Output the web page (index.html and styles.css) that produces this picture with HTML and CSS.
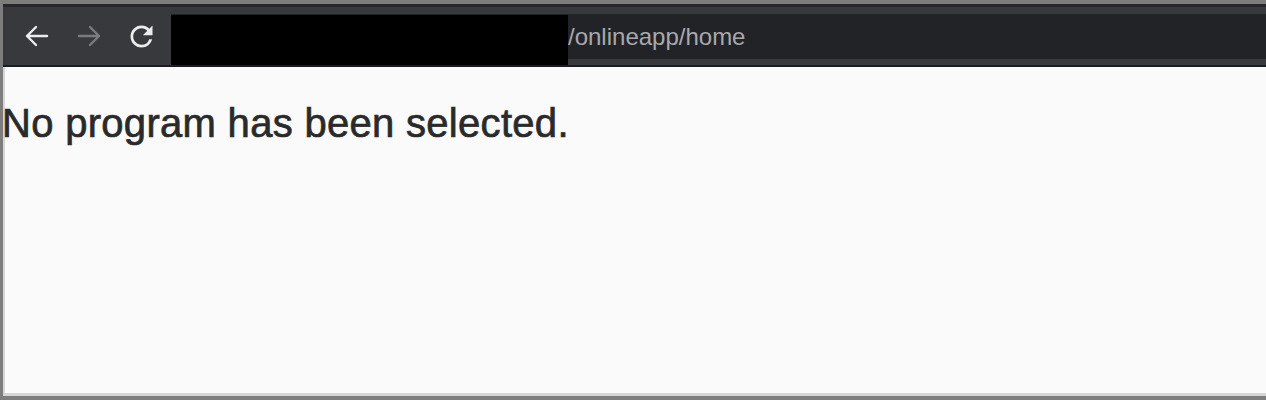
FILE: index.html
```html
<!DOCTYPE html>
<html lang="en">
<head>
<meta charset="utf-8">
<title>Online App</title>
<link rel="stylesheet" href="styles.css">
</head>
<body>
<div class="frame">
  <div class="strip"></div>
  <div class="toolbar">
    <div class="nav">
      <span class="btn">
        <svg width="26" height="24" viewBox="0 0 26 24"><path d="M23 12H3M12 3L3 12L12 21" fill="none" stroke="#ececec" stroke-width="2.4" stroke-linecap="round" stroke-linejoin="round"/></svg>
      </span>
      <span class="btn">
        <svg width="26" height="24" viewBox="0 0 26 24"><path d="M3 12H23M14 3L23 12L14 21" fill="none" stroke="#7b7c80" stroke-width="2.4" stroke-linecap="round" stroke-linejoin="round"/></svg>
      </span>
      <span class="btn">
        <svg width="33" height="33" viewBox="0 0 24 24"><path d="M17.65 6.35A7.958 7.958 0 0 0 12 4c-4.42 0-7.99 3.58-7.99 8s3.57 8 7.99 8c3.73 0 6.84-2.55 7.73-6h-2.08A5.99 5.99 0 0 1 12 18c-3.31 0-6-2.690-6-6s2.69-6 6-6c1.66 0 3.14 0.69 4.22 1.78L13 11h7V4l-2.35 2.35z" fill="#ececec"/></svg>
      </span>
    </div>
    <div class="url">
      <span class="redact"></span>
      <span class="urltext">/onlineapp/home</span>
    </div>
  </div>
  <div class="divider"></div>
  <main class="content">
    <h1 class="message">No program has been selected.</h1>
  </main>
</div>
</body>
</html>
```
FILE: styles.css
```css
html, body {
  margin: 0;
  padding: 0;
  height: 400px;
  overflow: hidden;
}
body {
  background: #7d7d7d;
  font-family: "Liberation Sans", Arial, sans-serif;
}
.frame {
  height: 400px;
  box-sizing: border-box;
  border-top: 4px solid #7d7d7d;
  border-left: 3px solid #7d7d7d;
  border-bottom: 4px solid #7d7d7d;
  display: flex;
  flex-direction: column;
}
.strip {
  height: 3px;
  background: #27282c;
}
.toolbar {
  height: 58px;
  background: #38393d;
  display: flex;
}
.nav {
  width: 168px;
  box-sizing: border-box;
  padding-left: 14px;
  display: flex;
  gap: 12px;
  align-items: center;
}
.btn {
  width: 40px;
  height: 40px;
  display: flex;
  align-items: center;
  justify-content: center;
}
.url {
  flex: 1;
  margin-top: 7px;
  height: 45px;
  background: #222327;
  display: flex;
  align-items: center;
}
.redact {
  align-self: flex-start;
  margin-top: 1px;
  width: 397px;
  height: 51px;
  background: #000;
}
.urltext {
  font-size: 24px;
  color: #a8a9ac;
  line-height: 1;
}
.divider {
  height: 2px;
  background: #1b1c1f;
}
.content {
  flex: 1;
  background: #fafafa;
  border-left: 2px solid #d6d6d6;
  border-bottom: 3px solid #d6d6d6;
}
.message {
  margin: 34px 0 0 -3px;
  font-size: 40px;
  font-weight: normal;
  color: #2a2a2a;
  -webkit-text-stroke: 0.7px #2a2a2a;
  letter-spacing: 0.3px;
}
```
